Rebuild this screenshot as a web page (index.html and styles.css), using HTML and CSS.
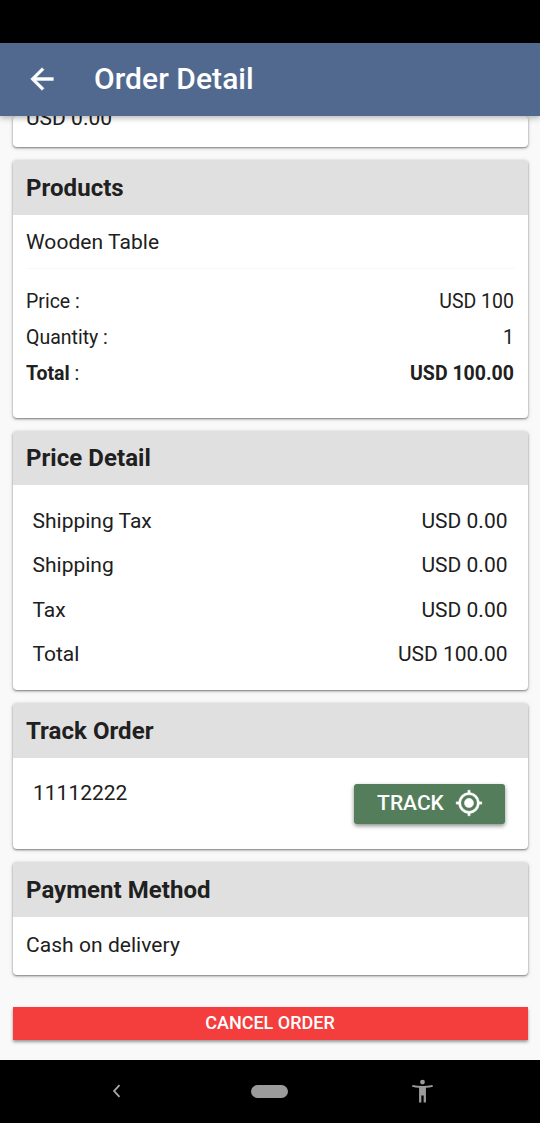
FILE: index.html
```html
<!DOCTYPE html>
<html lang="en">
<head>
<meta charset="utf-8">
<title>Order Detail</title>
<link rel="stylesheet" href="styles.css">
</head>
<body>
<div class="status-bar"></div>
<header class="app-bar">
  <svg class="back" viewBox="0 0 24 24"><path d="M20 11H7.83l5.59-5.59L12 4l-8 8 8 8 1.41-1.41L7.83 13H20v-2z"/></svg>
  <h1 class="title">Order Detail</h1>
</header>
<main class="content">
  <section class="card card-cut"><p class="cut-text">USD 0.00</p></section>
  <section class="card products">
    <h2 class="card-head">Products</h2>
    <p class="product-name">Wooden Table</p>
    <div class="lines">
      <div class="line"><span>Price :</span><span>USD 100</span></div>
      <div class="line"><span>Quantity :</span><span>1</span></div>
      <div class="line"><span><b>Total</b> :</span><b>USD 100.00</b></div>
    </div>
  </section>
  <section class="card price">
    <h2 class="card-head">Price Detail</h2>
    <div class="price-rows">
      <div class="row"><span>Shipping Tax</span><span>USD 0.00</span></div>
      <div class="row"><span>Shipping</span><span>USD 0.00</span></div>
      <div class="row"><span>Tax</span><span>USD 0.00</span></div>
      <div class="row"><span>Total</span><span>USD 100.00</span></div>
    </div>
  </section>
  <section class="card track">
    <h2 class="card-head">Track Order</h2>
    <div class="track-body">
      <span class="track-number">11112222</span>
      <button class="track-button"><span>TRACK</span>
        <svg class="locate" viewBox="0 0 24 24"><circle cx="12" cy="12" r="4"/><path d="M20.94 11A8.99 8.99 0 0 0 13 3.06V1h-2v2.06A8.99 8.99 0 0 0 3.06 11H1v2h2.06A8.99 8.99 0 0 0 11 20.94V23h2v-2.06A8.99 8.99 0 0 0 20.94 13H23v-2h-2.06zM12 19a7 7 0 1 1 0-14 7 7 0 0 1 0 14z"/></svg>
      </button>
    </div>
  </section>
  <section class="card payment">
    <h2 class="card-head">Payment Method</h2>
    <p class="payment-name">Cash on delivery</p>
  </section>
  <button class="cancel">CANCEL ORDER</button>
</main>
<nav class="nav-bar">
  <svg class="nav-back" viewBox="0 0 8 14"><path d="M7 1.2 1.6 7 7 12.8"/></svg>
  <span class="home"></span>
  <svg class="person" viewBox="0 0 22 24"><circle cx="11" cy="2.6" r="2.5"/><path d="M.5 5.6C7 7.2 15 7.2 21.5 5.6l.4 1.9c-2.4.6-4.8 1-7.3 1.2V24h-2.400v-7.400H9.800V24H7.400V8.700C4.900 8.500 2.500 8.100.1 7.500z"/></svg>
</nav>
</body>
</html>
```
FILE: styles.css
```css
* { box-sizing: border-box; }
body {
  margin: 0;
  width: 540px;
  height: 1123px;
  overflow: hidden;
  display: flex;
  flex-direction: column;
  background: #f9f9f9;
  color: #202020;
  font-family: Roboto, sans-serif;
  font-size: 21px;
}
h1, h2, p { margin: 0; }
button { border: 0; padding: 0; font-family: inherit; color: #fff; }
.status-bar { height: 43px; background: #000; flex: none; }
.app-bar {
  position: relative;
  z-index: 1;
  height: 73px;
  flex: none;
  display: flex;
  align-items: center;
  padding: 0 0 1px 25px;
  gap: 36px;
  background: #52698f;
  box-shadow: 0 2px 6px rgba(0, 0, 0, .3);
  color: #fff;
}
.back { width: 34px; height: 34px; fill: #fff; stroke: #fff; stroke-width: .35; }
.title { font-size: 30px; line-height: 36px; font-weight: 500; margin-left: -1px; letter-spacing: .05px; }
.content {
  height: 944px;
  flex: none;
  padding: 0 12px 0 13px;
  display: flex;
  flex-direction: column;
  gap: 13px;
}
.card {
  flex: none;
  background: #fff;
  border-radius: 4px;
  box-shadow: 0 1px 2px rgba(0, 0, 0, .42), 0 1px 4px rgba(0, 0, 0, .18);
}
.card-head {
  height: 55px;
  padding: 1px 0 0 13px;
  background: #e0e0e0;
  border-radius: 4px 4px 0 0;
  font-size: 24px;
  line-height: 55px;
  font-weight: 700;
  letter-spacing: .05px;
}
.card-cut { height: 31px; display: flex; align-items: flex-start; }
.cut-text { margin-top: -11px; padding-left: 13px; line-height: 26px; }
.products { height: 258px; }
.product-name {
  height: 54px;
  margin: 0 13px;
  line-height: 54px;
  border-bottom: 1px solid #f8f8f8;
  letter-spacing: .06px;
}
.lines { padding: 15px 14px 0 13px; font-size: 19.5px; }
.line { display: flex; justify-content: space-between; line-height: 36px; }
.price { height: 259px; }
.price .card-head { height: 54px; line-height: 54px; padding-top: 0; }
.price-rows { padding: 13.600px 20.500px 0 19.500px; }
.row { display: flex; justify-content: space-between; line-height: 44.6px; }
.track { height: 146px; }
.track-body { display: flex; justify-content: space-between; align-items: flex-start; padding: 21px 23px 0 20px; }
.track-number { line-height: 28px; }
.track-button {
  width: 151px;
  height: 40px;
  margin-top: 5px;
  padding: 0 0 2px 1px;
  display: flex;
  align-items: center;
  justify-content: center;
  gap: 11px;
  background: #547d5b;
  border-radius: 3px;
  box-shadow: 0 2px 4px rgba(0, 0, 0, .45);
  font-size: 21px;
  font-weight: 500;
}
.locate { width: 28px; height: 28px; fill: #fff; stroke: #fff; stroke-width: .3; }
.payment { height: 113px; }
.payment-name { padding-left: 13px; line-height: 56px; letter-spacing: .05px; }
.cancel {
  flex: none;
  height: 33px;
  margin-top: 19px;
  padding: 0 1px 2px 0;
  background: #f43d3d;
  box-shadow: 0 2px 3px rgba(0, 0, 0, .4);
  font-size: 18px;
  line-height: 31px;
  font-weight: 500;
}
.nav-bar {
  flex: none;
  height: 63px;
  display: flex;
  align-items: center;
  background: #000;
  padding-left: 112px;
}
.nav-back { width: 9px; height: 14px; margin-top: -1px; fill: none; stroke: #aaa; stroke-width: 1.8; }
.home { width: 37px; height: 13px; margin-left: 130px; border-radius: 7px; background: #9b9b9b; }
.person { width: 21px; height: 24px; margin-left: 124px; margin-top: -1px; fill: #9b9b9b; }
```
